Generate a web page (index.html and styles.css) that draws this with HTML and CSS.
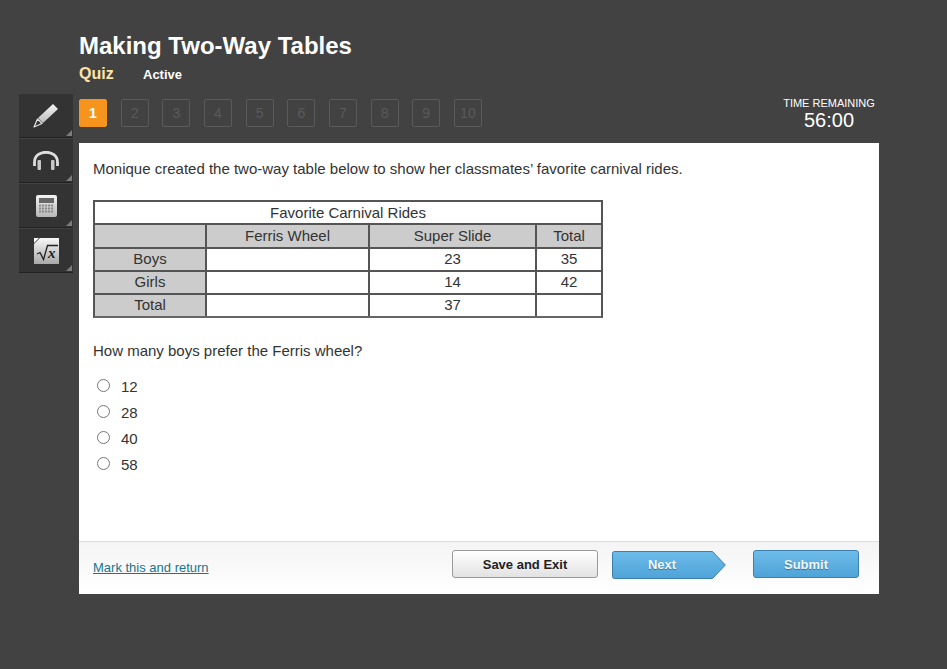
FILE: index.html
```html
<!DOCTYPE html>
<html lang="en">
<head>
    <meta charset="UTF-8">
    <meta name="viewport" content="width=device-width, initial-scale=1.0">
    <title>Making Two-Way Tables</title>
    <link rel="stylesheet" href="styles.css">
</head>
<body>
    <div class="layout">
        <div class="rail">
            <div class="tool">
                <svg width="26" height="25" viewBox="0 0 26 25">
                    <defs>
                        <linearGradient id="metal" x1="0" y1="0" x2="0" y2="1">
                            <stop offset="0" stop-color="#f4f4f4"/>
                            <stop offset="1" stop-color="#bdbdbd"/>
                        </linearGradient>
                    </defs>
                    <path d="M20 1 L25 6 L10 20 L5 15 Z" fill="url(#metal)"/>
                    <path d="M4.500 16 L9 20.500 L1 24 Z" fill="#333" stroke="#e4e4e4" stroke-width="1.200" stroke-linejoin="round"/>
                </svg>
            </div>
            <div class="tool">
                <svg width="26" height="19" viewBox="0 0 26 19">
                    <path d="M1.500 15 V11 C1.500 -2 24.500 -2 24.500 11 V15" fill="none" stroke="#dedede" stroke-width="2.800"/>
                    <rect x="4.500" y="9" width="3.500" height="10" rx="1" fill="#c8c8c8"/>
                    <rect x="18" y="9" width="3.500" height="10" rx="1" fill="#c8c8c8"/>
                </svg>
            </div>
            <div class="tool">
                <svg width="21" height="22" viewBox="0 0 21 22">
                    <defs>
                        <linearGradient id="calc" x1="0" y1="0" x2="0" y2="1">
                            <stop offset="0" stop-color="#f4f4f4"/>
                            <stop offset="1" stop-color="#b6b6b6"/>
                        </linearGradient>
                    </defs>
                    <rect x="0" y="0" width="21" height="22" rx="2" fill="url(#calc)"/>
                    <rect x="3" y="3" width="15" height="5" fill="#666"/>
                    <path d="M3 10.500 H18 M3 13.500 H18 M3 16.500 H18" stroke="#8a8a8a" stroke-width="2" stroke-dasharray="2.200 .8"/>
                </svg>
            </div>
            <div class="tool">
                <svg width="25" height="26" viewBox="0 0 25 26">
                    <defs>
                        <linearGradient id="sheet" x1="0" y1="0" x2="0" y2="1">
                            <stop offset="0" stop-color="#f8f8f8"/>
                            <stop offset="1" stop-color="#a8a8a8"/>
                        </linearGradient>
                    </defs>
                    <path d="M6 0 H25 V26 H0 V6 Z" fill="url(#sheet)"/>
                    <path d="M0 5 V0 H5 Z" fill="#fff"/>
                    <path d="M3 16 L6 14.500 L9.500 21.500 L13.500 7.500 H24" fill="none" stroke="#222" stroke-width="1.300"/>
                    <text class="root-x" x="14" y="20">x</text>
                </svg>
            </div>
        </div>

        <div class="main">
            <h1>Making Two-Way Tables</h1>
            <div class="subhead">
                <span class="kind">Quiz</span>
                <span class="status">Active</span>
            </div>

            <div class="navbar">
                <div class="steps">
                    <span class="step current">1</span>
                    <span class="step">2</span>
                    <span class="step">3</span>
                    <span class="step">4</span>
                    <span class="step">5</span>
                    <span class="step">6</span>
                    <span class="step">7</span>
                    <span class="step">8</span>
                    <span class="step">9</span>
                    <span class="step">10</span>
                </div>
                <div class="timer">
                    <div class="timer-label">TIME REMAINING</div>
                    <div class="timer-value">56:00</div>
                </div>
            </div>

            <div class="panel">
                <div class="content">
                    <p class="intro">Monique created the two-way table below to show her classmates’ favorite carnival rides.</p>

                    <table class="rides">
                        <colgroup>
                            <col class="c1"><col class="c2"><col class="c3"><col>
                        </colgroup>
                        <tr class="title-row"><td colspan="4">Favorite Carnival Rides</td></tr>
                        <tr class="heads"><th></th><th>Ferris Wheel</th><th>Super Slide</th><th>Total</th></tr>
                        <tr><th>Boys</th><td></td><td>23</td><td>35</td></tr>
                        <tr><th>Girls</th><td></td><td>14</td><td>42</td></tr>
                        <tr><th>Total</th><td></td><td>37</td><td></td></tr>
                    </table>

                    <p class="question">How many boys prefer the Ferris wheel?</p>

                    <div class="answers">
                        <label class="answer"><input type="radio" name="answer"><span>12</span></label>
                        <label class="answer"><input type="radio" name="answer"><span>28</span></label>
                        <label class="answer"><input type="radio" name="answer"><span>40</span></label>
                        <label class="answer"><input type="radio" name="answer"><span>58</span></label>
                    </div>
                </div>

                <div class="footer">
                    <a class="mark" href="#">Mark this and return</a>
                    <button class="btn btn-save">Save and Exit</button>
                    <button class="btn-next">
                        <svg class="next-shape" width="114" height="28" viewBox="0 0 114 28">
                            <defs>
                                <linearGradient id="blue" x1="0" y1="0" x2="0" y2="1">
                                    <stop offset="0" stop-color="#6dbcea"/>
                                    <stop offset="1" stop-color="#4fa3d8"/>
                                </linearGradient>
                            </defs>
                            <path d="M2.500 .5 H100.500 L113.300 14 L100.500 27.500 H2.500 Q.5 27.500 .5 25.500 V2.500 Q.5 .5 2.500 .5 Z" fill="url(#blue)" stroke="#3a7fae"/>
                        </svg>
                        <span class="next-label">Next</span>
                    </button>
                    <button class="btn btn-submit">Submit</button>
                </div>
            </div>
        </div>
    </div>
</body>
</html>
```

FILE: styles.css
```css
body {
    margin: 0;
    background-color: #424242;
    font-family: "Liberation Sans", Arial, sans-serif;
    color: #333;
}
.layout {
    display: flex;
    padding-left: 19px;
}
.rail {
    width: 54px;
    margin-top: 94px;
    margin-right: 6px;
}
.tool {
    position: relative;
    display: flex;
    align-items: center;
    justify-content: center;
    height: 43px;
    margin-bottom: 1px;
    background-color: #333;
    border-bottom: 1px solid #222;
}
.tool::after {
    content: "";
    position: absolute;
    right: 1px;
    bottom: 1px;
    border-style: solid;
    border-width: 0 0 6px 6px;
    border-color: transparent transparent #7c7c7c transparent;
}
.root-x {
    font-family: "Liberation Serif", serif;
    font-style: italic;
    font-weight: bold;
    font-size: 15px;
    fill: #222;
}
.main {
    width: 800px;
}
h1 {
    margin: 0;
    padding-top: 32px;
    font-size: 24px;
    line-height: 28px;
    color: #fff;
}
.subhead {
    display: flex;
    align-items: baseline;
    margin-top: 5px;
    font-weight: bold;
}
.kind {
    width: 64px;
    font-size: 16px;
    color: #ffe3a6;
}
.status {
    font-size: 13px;
    color: #fff;
}
.navbar {
    display: flex;
    justify-content: space-between;
    height: 49px;
    margin-top: 11px;
}
.steps {
    display: flex;
    align-items: flex-start;
    gap: 13.670px;
    padding-top: 5px;
}
.step {
    width: 26px;
    height: 26px;
    border: 1px solid #5a5a5a;
    border-radius: 2px;
    font-size: 14px;
    line-height: 26px;
    text-align: center;
    color: #5a5a5a;
}
.step.current {
    background-color: #f7941e;
    border-color: #f7941e;
    color: #fff;
    font-weight: bold;
}
.timer {
    width: 92px;
    margin-right: 4px;
    padding-top: 2px;
    text-align: center;
    color: #fff;
    white-space: nowrap;
}
.timer-label {
    font-size: 11px;
    line-height: 14px;
}
.timer-value {
    font-size: 20px;
    line-height: 21px;
}
.panel {
    display: flex;
    flex-direction: column;
    height: 451px;
    background-color: #fff;
}
.content {
    flex: 1;
    padding: 0 14px;
    font-size: 15px;
}
.intro {
    margin: 0;
    padding-top: 17px;
    line-height: 18px;
}
.rides {
    width: 510px;
    margin-top: 22px;
    border-collapse: separate;
    border-spacing: 0;
    border: 2px solid #555;
    border-bottom-color: #666;
    table-layout: fixed;
}
.rides td, .rides th {
    height: 21px;
    padding: 0;
    border-right: 2px solid #555;
    border-bottom: 2px solid #555;
    font-weight: normal;
    line-height: 20px;
    text-align: center;
    vertical-align: top;
}
.rides th {
    background-color: #ccc;
}
.rides .title-row td {
    line-height: 21px;
}
.rides .heads th {
    height: 22px;
    line-height: 22px;
}
.rides td:last-child, .rides th:last-child {
    border-right: none;
}
.rides tr:last-child td, .rides tr:last-child th {
    border-bottom: none;
}
.c1 { width: 112px; }
.c2 { width: 163px; }
.c3 { width: 167px; }
.question {
    margin: 0;
    padding-top: 24px;
    line-height: 18px;
}
.answers {
    margin-top: 13px;
}
.answer {
    display: flex;
    align-items: center;
    height: 26px;
}
.answer input {
    margin: 0 11px 0 4px;
    position: relative;
    top: -1px;
}
.footer {
    display: flex;
    align-items: flex-start;
    height: 44px;
    padding: 8px 0 0 14px;
    border-top: 1px solid #ddd;
    background: linear-gradient(#f4f4f4, #fff);
}
.mark {
    width: 359px;
    margin-top: 10px;
    font-size: 13px;
    color: #16758f;
}
.btn {
    height: 28px;
    padding: 0;
    border-radius: 3px;
    font-family: inherit;
    font-size: 13px;
    font-weight: bold;
    cursor: pointer;
}
.btn-save {
    width: 146px;
    margin-right: 14px;
    border: 1px solid #999;
    background: linear-gradient(#fff, #e2e2e2);
    color: #222;
}
.btn-next {
    position: relative;
    width: 114px;
    height: 28px;
    margin-top: 1px;
    margin-right: 27px;
    padding: 0 0 2px;
    border: none;
    background: none;
    font-family: inherit;
    font-size: 13px;
    font-weight: bold;
    color: #eef7fc;
    text-shadow: 0 1px 1px rgba(0, 0, 0, .35);
    cursor: pointer;
}
.next-shape {
    position: absolute;
    top: 0;
    left: 0;
}
.next-label {
    position: relative;
    margin-right: 14px;
}
.btn-submit {
    width: 106px;
    border: 1px solid #3a7fae;
    background: linear-gradient(#6dbcea, #4fa3d8);
    color: #eef7fc;
    text-shadow: 0 1px 1px rgba(0, 0, 0, .35);
}
```
